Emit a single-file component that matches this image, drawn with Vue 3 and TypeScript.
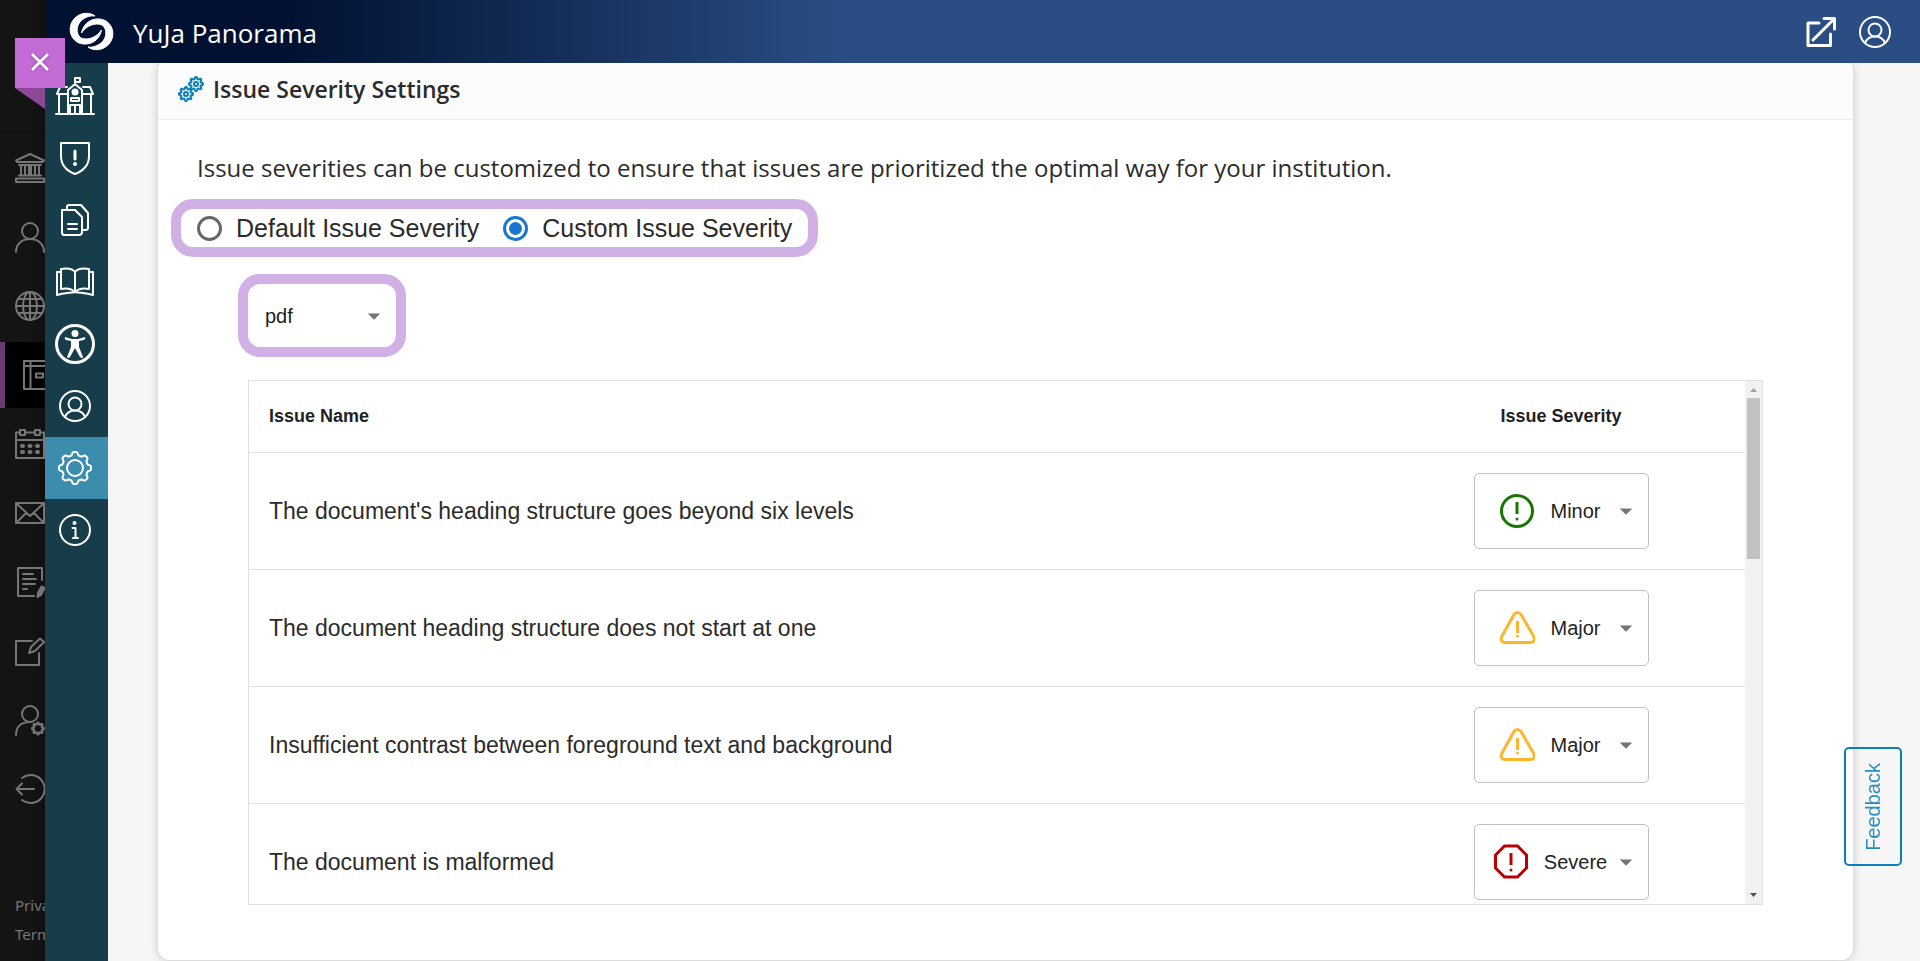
<script setup lang="ts">
import { ref } from 'vue'

type Severity = 'Minor' | 'Major' | 'Severe'

interface NavItem {
  label: string
  icon: string
  size: number
  active?: boolean
}

interface Issue {
  name: string
  severity: Severity
}

// Closed outline of a cog with rounded teeth around (cx, cy)
function cog(cx: number, cy: number, radius: number, depth: number, teeth: number): string {
  const points: string[] = []
  const steps = teeth * 16
  for (let i = 0; i < steps; i++) {
    const angle = (i / steps) * Math.PI * 2
    const wave = Math.tanh(2.2 * Math.cos(teeth * angle))
    const r = radius + depth * wave
    points.push(`${(cx + r * Math.sin(angle)).toFixed(2)} ${(cy - r * Math.cos(angle)).toFixed(2)}`)
  }
  return `M${points.join('L')}Z`
}

const userIcon =
  '<circle cx="16" cy="16" r="15"/><circle cx="16" cy="14" r="6.5"/><path d="M6 27c2-5 6-6.500 10-6.500s8 1.500 10 6.500"/>'

const campusNav: NavItem[] = [
  {
    label: 'Institution',
    size: 30,
    icon: '<path d="M1 7.500L15 1l14 6.500M2 9h26M4 12h22M6 13v9M10 13v9M14 13v9M16 13v9M20 13v9M24 13v9M4 22.500h22M1 29v-3.500h28V29z"/>',
  },
  { label: 'Profile', size: 30, icon: '<circle cx="15" cy="9" r="8"/><path d="M1 30c0-8 6-13 14-13s14 5 14 13"/>' },
  {
    label: 'Activity',
    size: 30,
    icon: '<circle cx="15" cy="15" r="14"/><ellipse cx="15" cy="15" rx="7" ry="14"/><path d="M15 1v28M1 15h28M3 8h24M3 22h24"/>',
  },
  {
    label: 'Courses',
    size: 30,
    active: true,
    icon: '<path d="M1 1h32v28H1zM7.500 1v28M1 6h30"/><path d="M13 13.500h7v4h-7z"/>',
  },
  {
    label: 'Calendar',
    size: 30,
    icon: '<path d="M5 3.500H1V29h28V3.500h-4M10 3.500h9M1 11h28"/><path d="M5 1h5v5H5zM20 1h5v5h-5z"/><path stroke-width="4" d="M7 17h1M14.500 17h1M22 17h1M7 23h1M14.500 23h1M22 23h1"/>',
  },
  {
    label: 'Messages',
    size: 30,
    icon: '<path d="M1 5h28v20H1zM1 5l14 13L29 5M1 25l10-10M29 25L19 15"/>',
  },
  {
    label: 'Grades',
    size: 30,
    icon: '<path d="M19 29H3V1h24v12M8 7h10M8 12h13M8 17h12M8 22h4"/><path fill="currentColor" d="M26.500 19.500l3 1.500-3.500 7-3.500 2 .5-4z"/>',
  },
  {
    label: 'Assist',
    size: 30,
    icon: '<path d="M17 5H1v24h23V17"/><path d="M14 17l2-6L25 2.500l4 3.500-9 9z"/>',
  },
  {
    label: 'Admin',
    size: 30,
    icon: `<circle cx="15" cy="9" r="8"/><path d="M1 30c0-8 5-13 14-13"/><path d="${cog(23, 23.5, 5, 1, 8)}"/>`,
  },
  { label: 'Sign Out', size: 30, icon: '<path d="M7 4a14 14 0 1 1 0 22M1.500 15H19M7 9.500L1.500 15 7 20.500"/>' },
]

const panoramaNav: NavItem[] = [
  {
    label: 'Institution',
    size: 38,
    icon: '<path d="M19 8V1h5v4h-5M12 37V13l7-6 7 6v24M3 17v20M35 17v20M0 37h38M11 10H4l-3 7h11M27 10h7l3 7H26M15 21h8v3h-8zM14 37v-9h10v9M19 29v8"/><circle cx="19" cy="15" r="2.500" fill="currentColor"/>',
  },
  {
    label: 'Issues',
    size: 32,
    icon: '<path d="M2 1h28v13c0 9-6 15-14 18C8 29 2 23 2 14z"/><path stroke-width="3" d="M16 9v8"/><circle cx="16" cy="22" r="1" fill="currentColor"/>',
  },
  {
    label: 'Documents',
    size: 32,
    icon: '<path d="M3 6h13l7 7v15q0 3-3 3H5q-2 0-2-3z"/><path d="M8 5V3q0-2 2-2h12l7 8v15q0 2-3 2h-2M9 20h9M9 25h9"/>',
  },
  {
    label: 'Courses',
    size: 38,
    icon: '<path d="M19 9v20c-4-4-9-4-14-3V6c6-1 11-1 14 3zM19 9c3-4 8-4 14-3v20c-5-1-10-1-14 3M5 9H1v23c7-2 13-2 18-3 5 1 11 1 18 3V9h-4"/>',
  },
  {
    label: 'Accessibility',
    size: 40,
    icon: '<circle cx="20" cy="20" r="18.500" stroke-width="3"/><g fill="currentColor" stroke="none"><circle cx="20" cy="9.500" r="3.500"/><path d="M10 13l7 2h6l7-2q1 2-1 3l-5 1v6l4 10q-1 2-3 0l-5-9-5 9q-2 2-3 0l4-10v-6l-5-1q-2-1-1-3z"/></g>',
  },
  { label: 'Users', size: 32, icon: userIcon },
  {
    label: 'Settings',
    size: 34,
    active: true,
    icon: `<path d="${cog(17, 17, 14.5, 1.6, 8)}"/><circle cx="17" cy="17" r="8"/>`,
  },
  {
    label: 'About',
    size: 32,
    icon: '<circle cx="16" cy="16" r="15"/><circle cx="15.500" cy="9" r="1" fill="currentColor"/><path d="M13.500 14H16.500v9.500M14 24h5"/>',
  },
]

const severityIcons: Record<Severity, string> = {
  Minor:
    '<circle cx="18" cy="18" r="15.500"/><path stroke-linecap="butt" d="M18 9v12"/><circle cx="18" cy="26" r="1.500" fill="currentColor" stroke="none"/>',
  Major:
    '<path d="M15 4.500q3.500-4 7 0L34.500 26q2.500 6-3 6.500H6Q.5 32 3 26z"/><path stroke-linecap="butt" d="M18.500 11v12"/><circle cx="18.500" cy="26" r="1.500" fill="currentColor" stroke="none"/>',
  Severe:
    '<path stroke-linejoin="miter" d="M11.500 2h13l9 9v13l-9 9h-13l-9-9V11z"/><path stroke-linecap="butt" d="M18 9v12"/><circle cx="18" cy="26" r="1.500" fill="currentColor" stroke="none"/>',
}

const severities: Severity[] = ['Minor', 'Major', 'Severe']
const mode = ref<'default' | 'custom'>('custom')
const fileType = ref('pdf')
const issues = ref<Issue[]>([
  { name: "The document's heading structure goes beyond six levels", severity: 'Minor' },
  { name: 'The document heading structure does not start at one', severity: 'Major' },
  { name: 'Insufficient contrast between foreground text and background', severity: 'Major' },
  { name: 'The document is malformed', severity: 'Severe' },
])

const smallCog = cog(8, 8, 6, 1, 8)
const swoosh =
  'M25 3C20-1 10-1 4 6c-6 7-5 18 3 23 9 5 22 1 24.500-12C27 24 18 28 11 25 5 21 6 10 14 5.500c4-2.500 8-3 11-2.500z'
</script>

<template>
  <div class="app">
    <aside class="campus">
      <nav class="campus-nav" aria-label="Campus">
        <a
          v-for="item in campusNav"
          :key="item.label"
          href="#"
          class="campus-link"
          :class="{ active: item.active }"
          :aria-label="item.label"
        >
          <svg class="icon" :width="item.size" :height="item.size" viewBox="0 0 30 30" v-html="item.icon"></svg>
        </a>
      </nav>
      <footer class="campus-footer">
        <a href="#">Privacy</a>
        <a href="#">Terms</a>
      </footer>
    </aside>

    <div class="panel">
      <header class="topbar">
        <svg class="logo" width="43" height="37" viewBox="0 0 43 37" aria-hidden="true">
          <path :d="swoosh" />
          <path transform="rotate(180 21.5 18.5)" :d="swoosh" />
        </svg>
        <span class="brand">YuJa Panorama</span>
        <a href="#" class="top-link" aria-label="Open in new window">
          <svg class="icon heavy" width="32" height="32" viewBox="0 0 32 32">
            <path d="M14 7H3v22.500h22.500V18M8 24L29 3M19 2.500h10.500V13" />
          </svg>
        </a>
        <a href="#" class="top-link" aria-label="Account">
          <svg class="icon" width="32" height="32" viewBox="0 0 32 32" v-html="userIcon"></svg>
        </a>
      </header>

      <div class="body">
        <nav class="side" aria-label="Panorama">
          <a
            v-for="item in panoramaNav"
            :key="item.label"
            href="#"
            class="side-link"
            :class="{ active: item.active }"
            :aria-label="item.label"
          >
            <svg
              class="icon"
              :width="item.size"
              :height="item.size"
              :viewBox="`0 0 ${item.size} ${item.size}`"
              v-html="item.icon"
            ></svg>
          </a>
        </nav>

        <main class="main">
          <section class="card">
            <header class="card-head">
              <svg class="icon cogs" width="26" height="26" viewBox="0 0 26 26" aria-hidden="true">
                <g transform="translate(0 10)"><path :d="smallCog" /><circle cx="8" cy="8" r="2" /></g>
                <g transform="translate(10 0)"><path :d="smallCog" /><circle cx="8" cy="8" r="2" /></g>
              </svg>
              <h1>Issue Severity Settings</h1>
            </header>

            <div class="card-body">
              <p class="intro">
                Issue severities can be customized to ensure that issues are prioritized the optimal way for your
                institution.
              </p>

              <div class="callout modes" role="radiogroup" aria-label="Issue severity mode">
                <label class="mode"><input v-model="mode" type="radio" name="mode" value="default" />Default Issue Severity</label>
                <label class="mode"><input v-model="mode" type="radio" name="mode" value="custom" />Custom Issue Severity</label>
              </div>

              <div class="callout filetype">
                <select v-model="fileType" aria-label="File type">
                  <option>pdf</option>
                  <option>docx</option>
                  <option>pptx</option>
                </select>
                <svg class="caret" width="30" height="30" viewBox="0 0 24 24"><path d="M7 10l5 5 5-5z" /></svg>
              </div>

              <div class="grid">
                <div class="grid-view">
                  <table>
                    <thead>
                      <tr>
                        <th scope="col">Issue Name</th>
                        <th scope="col" class="level">Issue Severity</th>
                      </tr>
                    </thead>
                    <tbody>
                      <tr v-for="issue in issues" :key="issue.name">
                        <td>{{ issue.name }}</td>
                        <td class="level">
                          <div class="picker">
                            <svg
                              class="mark"
                              :class="issue.severity.toLowerCase()"
                              width="36"
                              height="36"
                              viewBox="0 0 36 36"
                              v-html="severityIcons[issue.severity]"
                            ></svg>
                            <select v-model="issue.severity" :aria-label="`Severity: ${issue.name}`">
                              <option v-for="level in severities" :key="level">{{ level }}</option>
                            </select>
                            <svg class="caret" width="30" height="30" viewBox="0 0 24 24"><path d="M7 10l5 5 5-5z" /></svg>
                          </div>
                        </td>
                      </tr>
                    </tbody>
                  </table>
                </div>
                <div class="scrollbar" aria-hidden="true">
                  <svg width="17" height="17" viewBox="0 0 17 17"><path fill="#a3a3a3" d="M5 11h7L8.500 7z" /></svg>
                  <div class="track"><div class="thumb"></div></div>
                  <svg width="17" height="17" viewBox="0 0 17 17"><path fill="#505050" d="M5 6h7l-3.500 4z" /></svg>
                </div>
              </div>
            </div>
          </section>
        </main>
      </div>
    </div>

    <div class="closer">
      <button type="button" aria-label="Close panel">
        <svg width="20" height="20" viewBox="0 0 20 20"><path d="M2 1l16 16M18 1L2 17" /></svg>
      </button>
      <div class="tail"></div>
    </div>

    <button type="button" class="feedback"><span>Feedback</span></button>
  </div>
</template>

<style>
body {
  margin: 0;
}
</style>

<style scoped>
.app {
  display: flex;
  height: 100vh;
  overflow: hidden;
  color: #2b2b2b;
  font-family: "Liberation Sans", Arial, sans-serif;
}

.app *,
.app *::before {
  box-sizing: border-box;
}

.icon {
  fill: none;
  stroke: currentColor;
  stroke-width: 2;
  stroke-linecap: round;
  stroke-linejoin: round;
  overflow: visible;
  flex: none;
}

.icon.heavy {
  stroke-width: 3;
}

/* Campus rail, partly covered by the panel */
.campus {
  display: flex;
  flex-direction: column;
  flex: none;
  width: 45px;
  overflow: hidden;
  background: linear-gradient(90deg, #141414 70%, #0f0f0f);
  color: #767676;
}

.campus-nav {
  display: flex;
  flex-direction: column;
  gap: 3px;
  margin-top: 132px;
  padding-top: 2px;
  border-top: 1px solid #0c0c0c;
}

.campus-link {
  display: flex;
  align-items: center;
  height: 66px;
  padding-left: 15px;
  color: inherit;
}

.campus-link.active {
  padding-left: 18px;
  border-left: 5px solid #6a3a74;
  background: #000;
}

.campus-footer {
  display: flex;
  flex-direction: column;
  gap: 5px;
  margin-top: auto;
  padding: 0 0 15px 15px;
  font: 15px/24px "Noto Sans", sans-serif;
}

.campus-footer a {
  color: inherit;
  text-decoration: none;
}

.panel {
  display: flex;
  flex-direction: column;
  flex: 1;
  min-width: 0;
  background: #f6f6f6;
}

.topbar {
  display: flex;
  align-items: center;
  flex: none;
  height: 63px;
  padding: 0 29px 0 25px;
  background: linear-gradient(90deg, #011131 13%, #2a4e84 43%);
  color: #fff;
  z-index: 1;
}

.logo {
  fill: #fff;
  stroke: #fff;
  stroke-width: 1;
  overflow: visible;
}

.brand {
  margin: 2px auto 0 20px;
  font: 26px/36px "Open Sans", "Noto Sans", sans-serif;
}

.top-link {
  display: flex;
  margin-left: 22px;
  color: #fff;
}

.body {
  display: flex;
  flex: 1;
  min-height: 0;
}

.side {
  flex: none;
  width: 63px;
  padding-top: 2px;
  background: #183d4a;
  color: #fff;
}

.side-link {
  display: flex;
  align-items: center;
  justify-content: center;
  height: 62px;
  padding-right: 3px;
  color: inherit;
}

.side-link.active {
  background: #3c8dad;
}

.main {
  display: flex;
  flex: 1;
  min-width: 0;
  padding: 0 67px 1px 50px;
}

.card {
  display: flex;
  flex-direction: column;
  flex: 1;
  min-width: 0;
  margin-top: -4px;
  border-radius: 12px;
  background: #fff;
  box-shadow: 0 1px 10px rgba(0, 0, 0, 0.2);
}

.card-head {
  display: flex;
  align-items: center;
  gap: 9px;
  flex: none;
  height: 61px;
  padding: 0 20px;
  border-bottom: 1px solid #eee;
  border-radius: 12px 12px 0 0;
  background: #fcfcfc;
}

.cogs {
  color: #0b80b8;
}

h1 {
  margin: 0;
  font: 600 23px/32px "Open Sans", "Noto Sans", sans-serif;
}

.card-body {
  display: flex;
  flex-direction: column;
  align-items: flex-start;
  flex: 1;
  min-height: 0;
  padding: 30px 90px 55px 13px;
}

.intro {
  margin: 0 0 13px 26px;
  font: 24px/36px "Open Sans", "Noto Sans", sans-serif;
}

.callout {
  border: 10px solid #d1b0e5;
  border-radius: 22px;
}

.modes {
  display: flex;
  align-items: center;
  gap: 24px;
  height: 58px;
  padding: 0 16px;
  font-size: 25px;
}

.mode {
  display: flex;
  align-items: center;
  gap: 14px;
}

.mode input {
  display: grid;
  place-items: center;
  appearance: none;
  width: 25px;
  height: 25px;
  margin: 0;
  border: 3px solid #666;
  border-radius: 50%;
}

.mode input:checked {
  border-color: #1976d2;
}

.mode input:checked::before {
  content: "";
  width: 13px;
  height: 13px;
  border-radius: 50%;
  background: #1976d2;
}

select {
  appearance: none;
  margin: 0;
  padding: 0;
  border: 0;
  background: transparent;
  color: #222;
  font: 20px/28px "Liberation Sans", Arial, sans-serif;
}

.filetype {
  display: flex;
  align-items: center;
  position: relative;
  width: 168px;
  height: 83px;
  margin: 17px 0 23px 67px;
}

.filetype select {
  flex: 1;
  height: 100%;
  padding-left: 17px;
}

.caret {
  position: absolute;
  right: 7px;
  fill: #757575;
  pointer-events: none;
}

.grid {
  display: flex;
  align-self: stretch;
  flex: 1;
  min-height: 0;
  margin-left: 77px;
  border: 1px solid #e0e0e0;
}

.grid-view {
  flex: 1;
  min-width: 0;
  overflow: hidden;
}

table {
  width: 100%;
  border-collapse: separate;
  border-spacing: 0;
}

th,
td {
  padding: 20px;
  border-bottom: 1px solid #e0e0e0;
  text-align: left;
}

th {
  height: 72px;
  color: #1f1f1f;
  font-size: 18px;
}

td {
  font-size: 23px;
}

.level {
  width: 368px;
  text-align: center;
}

.picker {
  display: flex;
  align-items: center;
  justify-content: center;
  gap: 15px;
  position: relative;
  width: 175px;
  height: 76px;
  margin: 0 auto;
  padding: 0 37px 0 15px;
  border: 1px solid #c0c0c0;
  border-radius: 5px;
}

.picker select {
  field-sizing: content;
}

.mark {
  flex: none;
  fill: none;
  stroke: currentColor;
  stroke-width: 3;
  stroke-linejoin: round;
}

.minor {
  color: #197600;
}

.major {
  color: #ffb52b;
}

.severe {
  color: #bb0005;
}

.scrollbar {
  display: flex;
  flex-direction: column;
  flex: none;
  width: 17px;
  background: #f1f1f1;
}

.scrollbar svg {
  flex: none;
}

.track {
  flex: 1;
  padding: 0 2px;
}

.thumb {
  height: 33%;
  background: #c1c1c1;
}

/* Ribbon tab that lies over both rails */
.closer {
  position: absolute;
  top: 38px;
  left: 15px;
  z-index: 2;
}

.closer button {
  display: grid;
  place-items: center;
  width: 50px;
  height: 50px;
  padding: 0;
  border: 0;
  background: #c46cd6;
}

.closer path {
  fill: none;
  stroke: #fff;
  stroke-width: 3;
  filter: drop-shadow(0 0 1px #7a2a8c);
}

.tail {
  width: 30px;
  height: 21px;
  background: #8b4998;
  clip-path: polygon(0 0, 100% 0, 100% 100%);
}

.feedback {
  display: grid;
  place-items: center;
  position: absolute;
  right: 18px;
  bottom: 95px;
  z-index: 2;
  width: 58px;
  height: 119px;
  padding: 0;
  border: 2px solid #0b80b8;
  border-radius: 5px;
  background: transparent;
  color: #2a8fc0;
  font: 20px/24px "Liberation Sans", Arial, sans-serif;
}

.feedback span {
  writing-mode: vertical-rl;
  transform: rotate(180deg);
}
</style>
